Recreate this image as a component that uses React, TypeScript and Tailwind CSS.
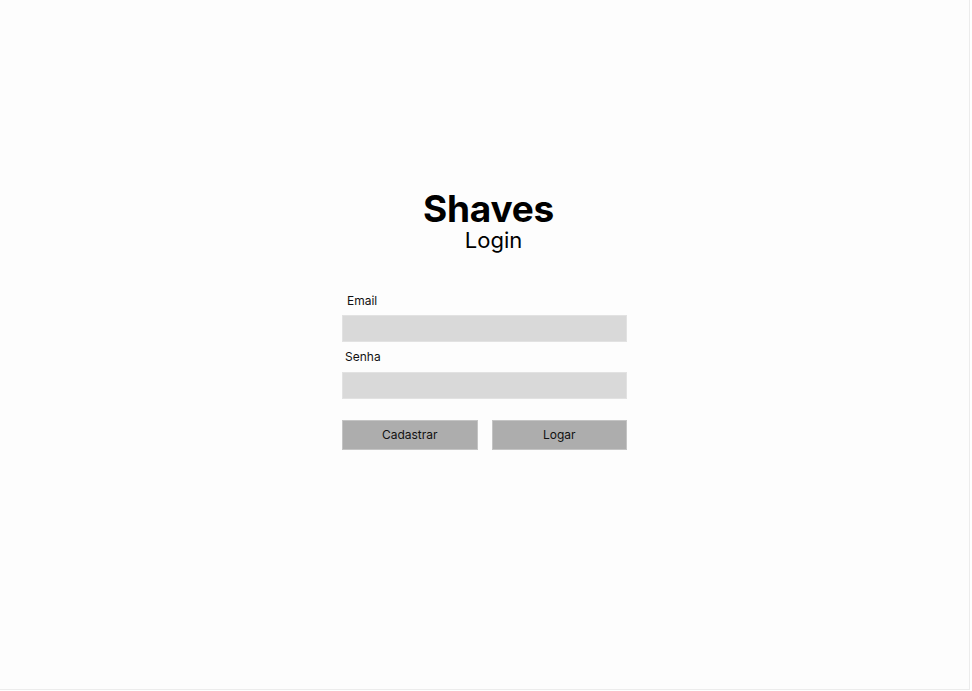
import React from 'react';

export default function App() {
  return (
    <div className="min-h-[691px] bg-white font-['Inter','Liberation_Sans',sans-serif] text-black">
      <div className="w-[970px] h-[690px] bg-[#fdfdfd] border-r border-b border-[#ececec] flex flex-col items-center pt-[191px]">
        <h1 className="ml-[8px] text-[37px] leading-[36px] font-bold tracking-[-0.2px]">Shaves</h1>
        <p className="ml-[18px] mt-[2px] text-[22px] leading-[22px]">Login</p>

        <form className="w-[285px] mt-[42px] flex flex-col" onSubmit={(e) => e.preventDefault()}>
          <label className="pl-[5px] text-[12px] leading-[15px] text-[#111]">Email</label>
          <input className="mt-[7px] h-[27px] bg-[#d9d9d9] border border-[#e2e2e2] outline-none" type="email" />

          <label className="mt-[7px] pl-[3px] text-[12px] leading-[15px] text-[#111]">Senha</label>
          <input className="mt-[8px] h-[27px] bg-[#d9d9d9] border border-[#e2e2e2] outline-none" type="password" />

          <div className="mt-[21px] grid grid-cols-2 gap-[14px]">
            <button type="button" className="h-[30px] bg-[#adadad] border border-[#c4c4c4] text-[12px] text-[#111]">
              Cadastrar
            </button>
            <button type="submit" className="h-[30px] bg-[#adadad] border border-[#c4c4c4] text-[12px] text-[#111]">
              Logar
            </button>
          </div>
        </form>
      </div>
    </div>
  );
}
